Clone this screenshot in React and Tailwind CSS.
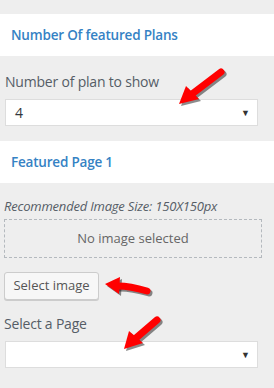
import React from 'react';

const Arrow = ({ d, head }) => (
  <g>
    <path d={d} stroke="rgba(0,0,0,0.45)" strokeWidth="7" fill="none" strokeLinecap="round" transform="translate(2,2)" />
    <polygon points={head} fill="rgba(0,0,0,0.45)" transform="translate(2,2)" />
    <path d={d} stroke="#ff0000" strokeWidth="7" fill="none" strokeLinecap="round" />
    <polygon points={head} fill="#ff0000" />
  </g>
);

const SelectBox = ({ value }) => (
  <div className="ml-[5px] w-[253px] h-[27px] bg-white border border-[#dddddd] flex items-center justify-between pl-[9px] pr-[7px] text-[14px] text-[#32373c]">
    <span>{value}</span>
    <span className="text-[9px] text-[#333]">▼</span>
  </div>
);

export default function App() {
  return (
    <div className="relative w-[274px] h-[388px] bg-[#eeeeee] overflow-hidden" style={{ fontFamily: '"Open Sans", "Noto Sans", sans-serif' }}>
      <div className="h-[14px]" />
      <div className="h-[42px] bg-white flex items-center pl-[11px]">
        <h3 className="text-[13.5px] font-semibold text-[#3582c4] tracking-[-0.2px]">Number Of featured Plans</h3>
      </div>

      <div className="pt-[17px]">
        <div className="pl-[5px] h-[17px] leading-[17px] text-[14px] text-[#555d66] font-medium tracking-[-0.2px]">Number of plan to show</div>
        <div className="mt-[9px]">
          <SelectBox value="4" />
        </div>
      </div>

      <div className="mt-[15px] h-[42px] bg-white flex items-center pl-[11px]">
        <h3 className="text-[13.5px] font-semibold text-[#3582c4] tracking-[-0.2px]">Featured Page 1</h3>
      </div>

      <div className="pl-[4px]">
        <div className="mt-[15px] h-[16px] leading-[16px] text-[13px] italic text-[#555d66] tracking-[-0.2px] whitespace-nowrap">Recommended Image Size: 150X150px</div>
        <div className="mt-[5px] w-[258px] h-[39px] border border-dashed border-[#b4b9be] flex items-center justify-center text-[13px] text-[#666]">
          No image selected
        </div>
        <button className="mt-[14px] h-[28px] w-[95px] bg-[#f7f7f7] border border-[#cccccc] rounded-[3px] shadow-[0_1px_0_#cccccc] text-[13px] text-[#555] whitespace-nowrap flex items-center justify-center">
          Select image
        </button>
        <div className="mt-[15px] h-[17px] leading-[17px] text-[14px] text-[#555d66] font-medium tracking-[-0.2px]">Select a Page</div>
      </div>
      <div className="mt-[9px]">
        <SelectBox value="" />
      </div>

      <svg className="absolute left-0 top-0 pointer-events-none" width="274" height="388">
        <Arrow d="M221 72 L192 94" head="179,104 186,86 199,99" />
        <Arrow d="M147 291 Q130 286 118 286" head="105,284 120,277 119,294" />
        <Arrow d="M157 320 L136 338" head="124,349 129,331 143,343" />
      </svg>
    </div>
  );
}
